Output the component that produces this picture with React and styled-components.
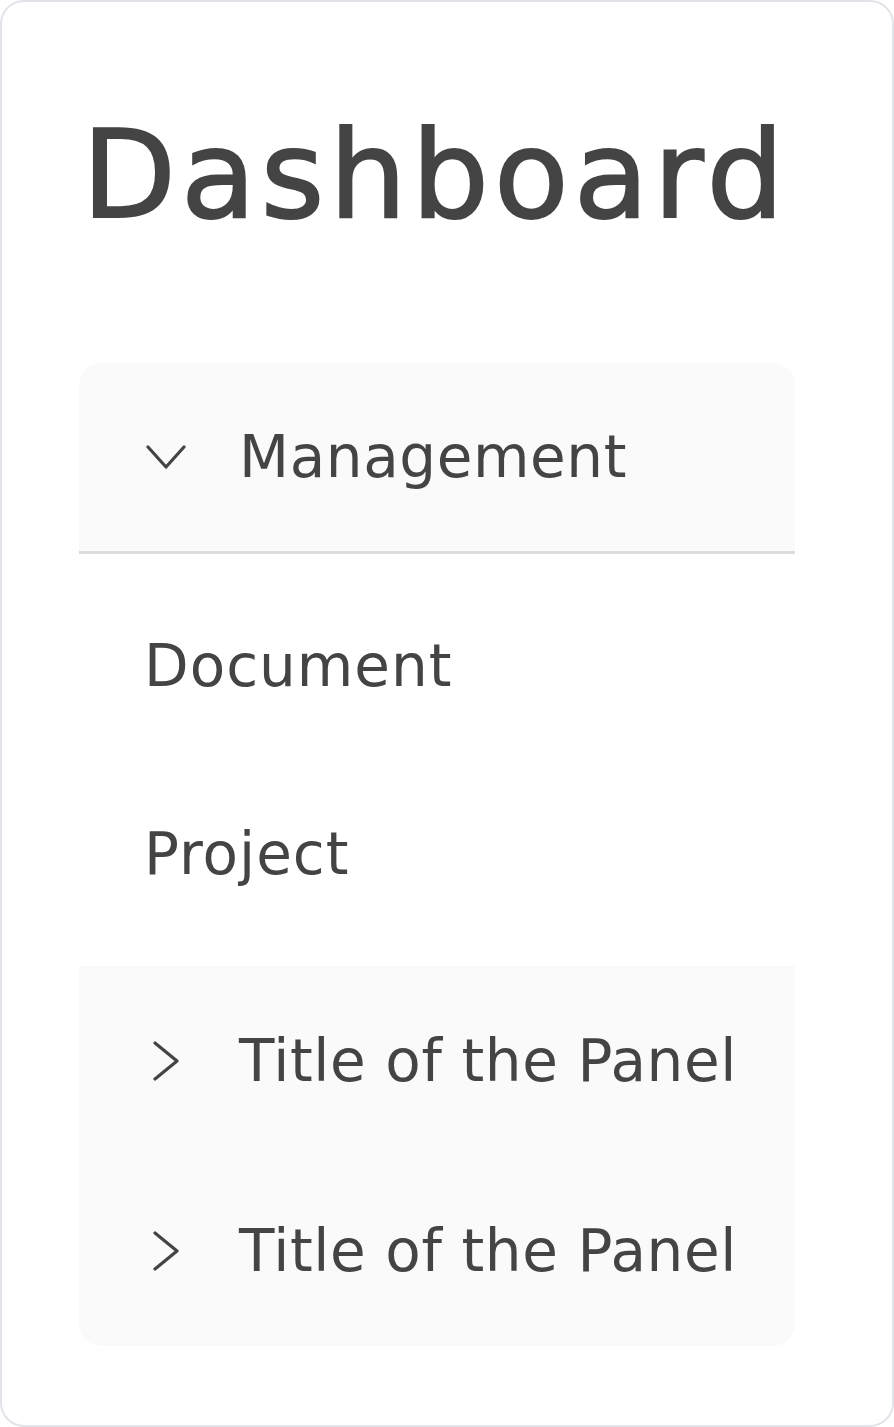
import React from "react";
import styled, { createGlobalStyle } from "styled-components";

const GlobalStyle = createGlobalStyle`
  html, body {
    margin: 0;
    padding: 0;
    background: #ffffff;
  }
  * {
    box-sizing: border-box;
  }
`;

const Card = styled.div`
  width: 894px;
  height: 1427px;
  border: 2px solid #e1e4e8;
  border-radius: 24px;
  background: #ffffff;
  padding: 112px 0 0 77px;
  font-family: "DejaVu Sans", Inter, sans-serif;
  color: #444444;
`;

const Title = styled.h1`
  margin: 0 0 127px 3px;
  font-size: 122px;
  line-height: 1;
  font-weight: 400;
  letter-spacing: 5px;
  -webkit-text-stroke: 2px #444444;
`;

const Accordion = styled.div`
  width: 716px;
  border-radius: 22px;
  overflow: hidden;
  background: #fafafa;
`;

const PanelHeader = styled.div`
  display: flex;
  align-items: center;
  height: ${(p) => (p.$open ? "191px" : "190px")};
  padding-left: 67px;
  border-bottom: ${(p) => (p.$open ? "3px solid #dcdcdc" : "none")};
  font-size: 58px;
  line-height: 1;
  font-weight: 400;
  letter-spacing: 0.6px;
  cursor: pointer;
`;

const IconSlot = styled.span`
  display: flex;
  align-items: center;
  justify-content: center;
  width: 40px;
  margin-right: 53px;
`;

const PanelBody = styled.div`
  background: #ffffff;
  padding: 18px 0;
`;

const Item = styled.div`
  display: flex;
  align-items: center;
  height: 188px;
  padding-left: 65px;
  font-size: 58px;
  line-height: 1;
  font-weight: 400;
  letter-spacing: 1px;
`;

const ChevronDown = () => (
  <svg width="40" height="26" viewBox="0 0 40 26" fill="none">
    <polyline
      points="2,3 20,23 38,3"
      stroke="#444"
      strokeWidth="3.2"
      strokeLinecap="round"
      strokeLinejoin="round"
    />
  </svg>
);

const ChevronRight = () => (
  <svg width="28" height="40" viewBox="0 0 28 40" fill="none">
    <polyline
      points="3,2 25,20 3,38"
      stroke="#444"
      strokeWidth="3.2"
      strokeLinecap="round"
      strokeLinejoin="round"
    />
  </svg>
);

export default function App() {
  return (
    <>
      <GlobalStyle />
      <Card>
        <Title>Dashboard</Title>
        <Accordion>
          <PanelHeader $open>
            <IconSlot>
              <ChevronDown />
            </IconSlot>
            Management
          </PanelHeader>
          <PanelBody>
            <Item>Document</Item>
            <Item>Project</Item>
          </PanelBody>
          <PanelHeader>
            <IconSlot>
              <ChevronRight />
            </IconSlot>
            Title of the Panel
          </PanelHeader>
          <PanelHeader>
            <IconSlot>
              <ChevronRight />
            </IconSlot>
            Title of the Panel
          </PanelHeader>
        </Accordion>
      </Card>
    </>
  );
}
